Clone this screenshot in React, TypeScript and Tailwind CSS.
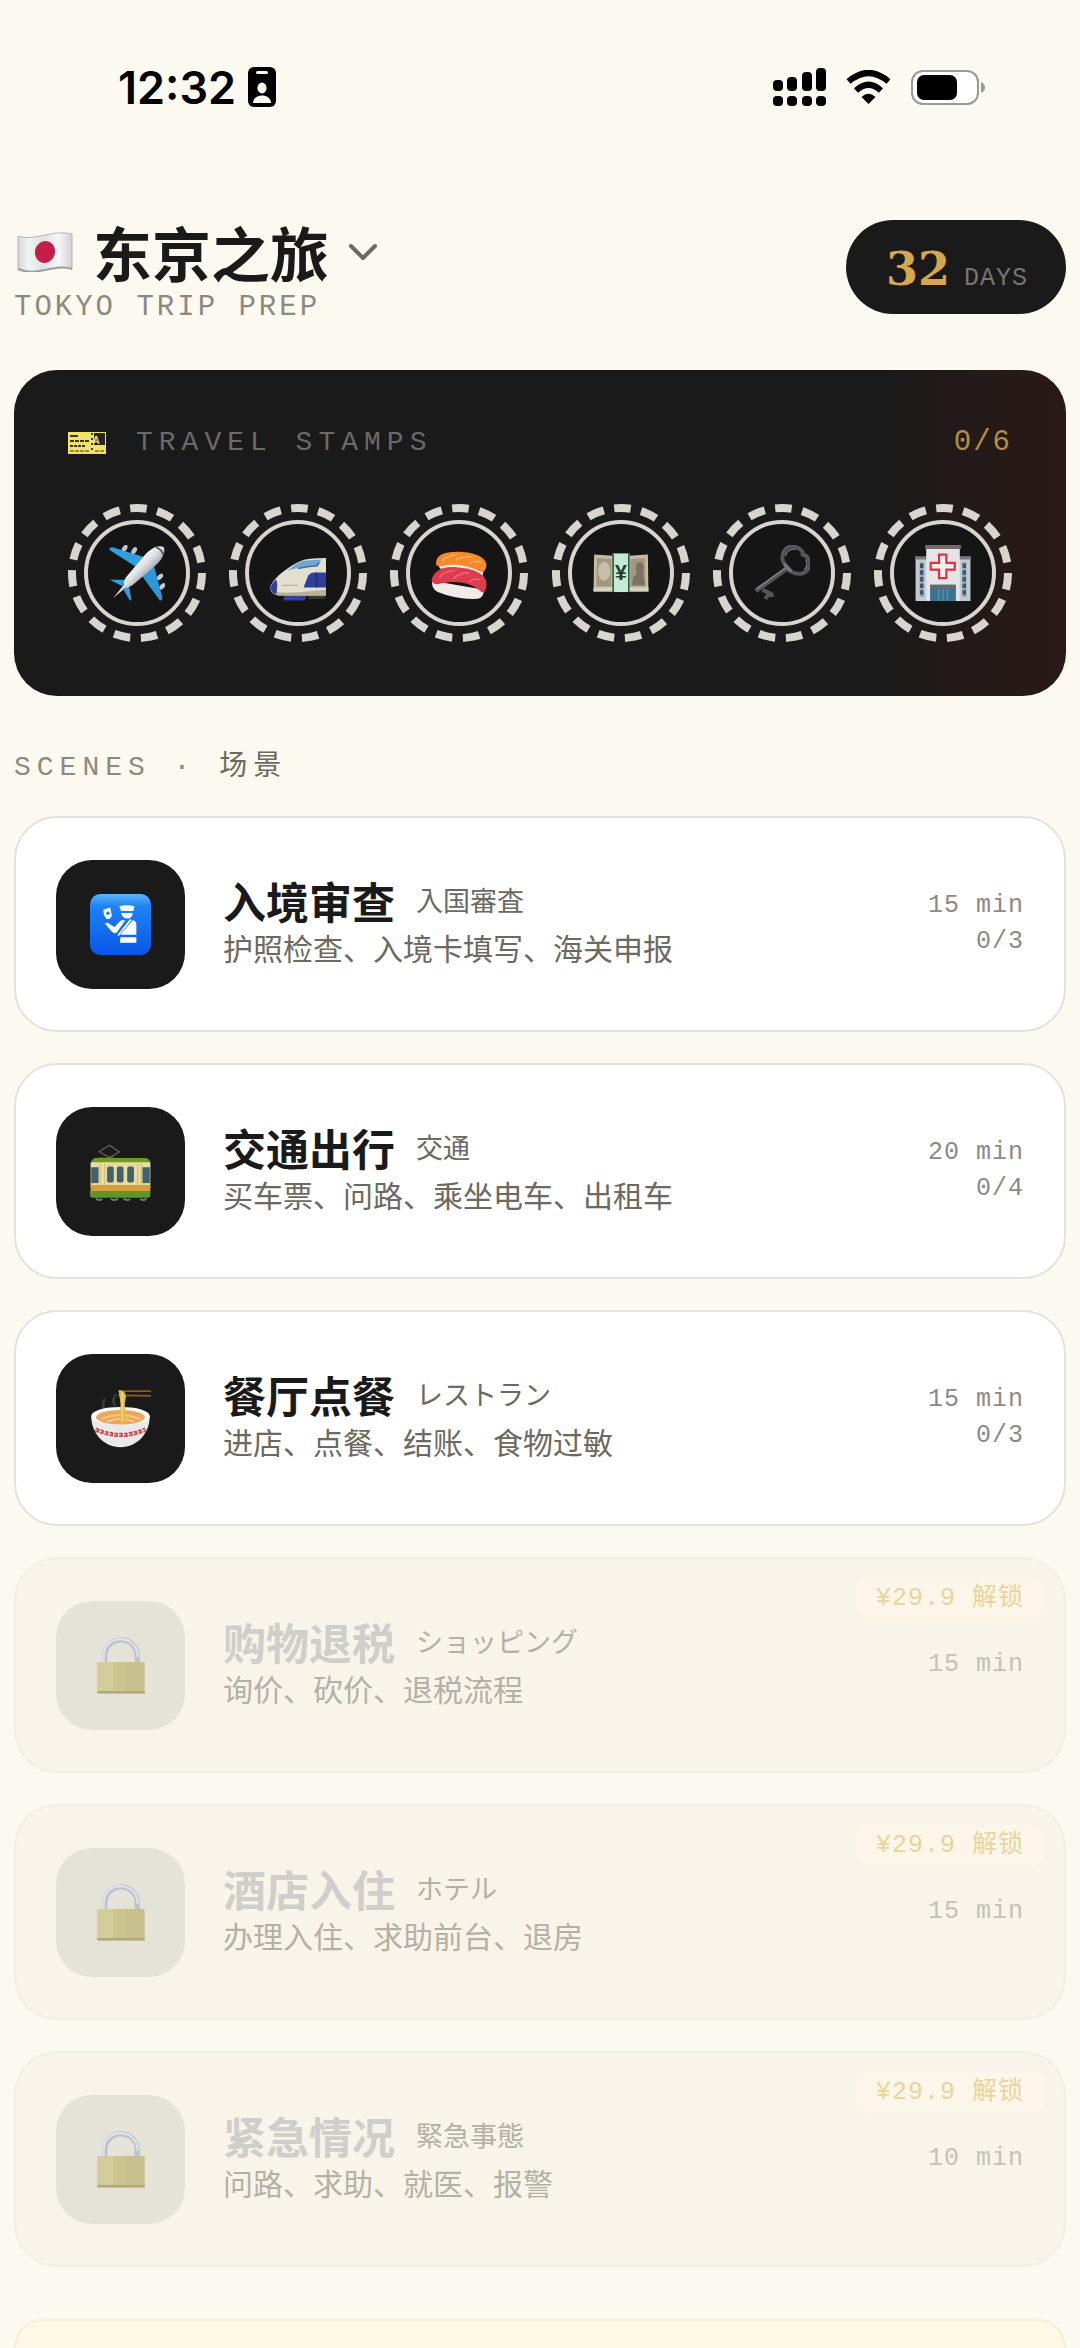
import React from "react";
import { ChevronDown } from "lucide-react";

const mono = "font-['Liberation_Mono','Noto_Sans_CJK_SC',monospace]";

type Scene = {
  title: string;
  local: string;
  description: string;
  minutes: number;
  total: number;
  price?: string;
  icon: React.ReactNode;
};

const Flag = () => (
  <svg viewBox="-3 0 69 40" className="h-10 w-[69px]" aria-hidden="true">
    <defs>
      <linearGradient id="flag" x1="0" x2="1">
        <stop offset="0" stopColor="#d5d7da" />
        <stop offset="0.2" stopColor="#f3f4f5" />
        <stop offset="0.45" stopColor="#dfe1e4" />
        <stop offset="0.75" stopColor="#f6f6f7" />
        <stop offset="1" stopColor="#cfd1d4" />
      </linearGradient>
    </defs>
    <path d="M1 4 C11 7 18 5 28 3 S46 0 55 2 V37 C46 34 37 36 28 38 S10 41 1 37 Z" fill="url(#flag)" stroke="#b3b5b8" strokeWidth="1" />
    <path d="M1 37 C11 41 18 40 28 38 S46 34 55 37" fill="none" stroke="#9c9ea1" strokeWidth="2" />
    <ellipse cx="28" cy="20" rx="10" ry="11" fill="#c41e4b" transform="rotate(14 28 20)" />
  </svg>
);

const Ticket = () => (
  <svg viewBox="0 0 38 22" className="h-[22px] w-[38px]" aria-hidden="true">
    <rect width="38" height="22" fill="#f1e36a" />
    <rect x="26" y="1" width="11" height="12" fill="#26241a" />
    <text x="31" y="12" textAnchor="middle" fontSize="10" fontWeight="700" fontFamily="Liberation Sans" fill="#f1e36a">
      A
    </text>
    <g stroke="#3b361c" strokeWidth="2">
      <path d="M2 4h8" />
      <path d="M2 9h19" strokeDasharray="4 1" />
      <path d="M2 14h15" strokeDasharray="3 1" />
      <path d="M2 19h20M27 19h9" strokeWidth="1" strokeDasharray="4 1" />
      <path d="M24 1v20" strokeDasharray="2 3" />
    </g>
  </svg>
);

const Plane = () => (
  <svg viewBox="0 0 100 100" className="size-14" aria-hidden="true">
    <defs>
      <linearGradient id="body" x1="0.3" y1="0.3" x2="0.6" y2="0.6">
        <stop offset="0" stopColor="#ffffff" />
        <stop offset="0.6" stopColor="#e2e3e6" />
        <stop offset="1" stopColor="#a9acb2" />
      </linearGradient>
    </defs>
    <g fill="#c3c6cb">
      <ellipse cx="28" cy="6" rx="4" ry="7" transform="rotate(35 28 6)" />
      <ellipse cx="45" cy="10" rx="4" ry="7" transform="rotate(35 45 10)" />
      <ellipse cx="91" cy="57" rx="4" ry="7" transform="rotate(45 91 57)" />
      <ellipse cx="95" cy="74" rx="4" ry="7" transform="rotate(45 95 74)" />
    </g>
    <path d="M1 9 Q0 4 6 4 L64 22 L50 40 Z" fill="#2f9fe0" />
    <path d="M80 36 L95 93 Q96 100 91 99 L58 54 Z" fill="#2a97da" />
    <path d="M1 62 L30 62 L24 73 Z M35 69 L40 98 Q38 101 36 97 L26 80 Z" fill="#2f9fe0" />
    <path d="M98 4 C101 12 96 24 86 34 L44 70 Q36 76 30 76 L7 95 L26 72 Q26 64 30 58 L64 18 C76 4 90 -1 98 4Z" fill="url(#body)" />
    <path d="M84 4 Q93 7 97 17" stroke="#4a4e55" strokeWidth="3" fill="none" />
  </svg>
);

const Bullet = () => (
  <svg viewBox="0 0 100 100" className="size-14" aria-hidden="true">
    <path d="M26 88 H66 L62 99 H24 Z" fill="#34419c" />
    <path d="M66 88 H98 V96 H70 Z" fill="#3b3a33" />
    <path d="M0 76 C4 62 28 40 56 28 Q66 23 100 23 V90 H18 C6 90 0 84 0 76Z" fill="#e4e0cf" />
    <path d="M3 82 C20 88 60 84 100 80 V90 H18 Q8 90 3 82Z" fill="#b7b293" />
    <path d="M0 76 Q3 68 11 61 Q15 72 11 88 Q1 86 0 76Z" fill="#34419c" />
    <path d="M31 46 Q48 31 60 28 L92 26 L84 37 Q50 39 31 46Z" fill="#6fa7d4" />
    <path d="M50 42 Q66 38 84 37 L88 31" stroke="#3c6ea3" strokeWidth="3" fill="none" />
    <path d="M68 55 Q72 49 80 49 H100 V76 H60 Z" fill="#2f3f9c" />
    <path d="M83 49 V76" stroke="#1f2a70" strokeWidth="2" />
    <path d="M22 72 H50" stroke="#c9a98d" strokeWidth="2" />
  </svg>
);

const Sushi = () => (
  <svg viewBox="0 0 100 100" className="size-14" aria-hidden="true">
    <path d="M12 32 Q50 28 94 44 L92 56 Q50 52 16 42Z" fill="#efe9e2" />
    <path d="M9 34 C8 18 24 12 46 12 C74 12 96 20 99 34 C99 46 94 50 86 47 C66 36 42 32 18 38 Q10 39 9 34Z" fill="#f58a2c" />
    <path d="M20 28 Q32 18 46 17 M44 27 Q60 19 74 21 M68 33 Q80 27 90 31" stroke="#ffa95c" strokeWidth="3" fill="none" />
    <path d="M2 64 Q0 78 12 84 Q46 98 84 96 Q94 94 95 80Z" fill="#f1ece6" />
    <path d="M1 62 C6 44 24 37 48 40 C78 42 98 52 99 68 C99 82 95 87 90 84 C78 70 48 62 22 68 Q2 74 1 62Z" fill="#dc3c4e" />
    <path d="M14 58 Q26 46 42 46 M40 60 Q54 48 68 50 M68 66 Q78 58 88 62" stroke="#e96874" strokeWidth="3" fill="none" />
  </svg>
);

const Yen = () => (
  <svg viewBox="0 0 100 100" className="size-14" aria-hidden="true">
    <path d="M2 17 L36 19 V83 H1 Z M64 19 L98 17 L99 83 H64Z" fill="#c6bca6" />
    <path d="M7 23 L33 25 V74 H6 Z M67 25 L93 23 L94 74 H67Z" fill="#a2977f" />
    <path d="M1 76h98v7H1z" fill="#d7d1c2" />
    <ellipse cx="20" cy="47" rx="11" ry="17" fill="#c9bfa8" />
    <path d="M70 72 Q70 56 78 52 Q72 32 84 30 Q94 34 89 52 L93 72Z" fill="#7c7162" />
    <path d="M35 15h30v69H35z" fill="#c4ead1" />
    <path d="M36 15v69M64 15v69" stroke="#2f5f4a" strokeWidth="3" />
    <text x="50" y="62" textAnchor="middle" fontSize="38" fontWeight="700" fontFamily="Liberation Sans" fill="#1f3a2e">
      ¥
    </text>
  </svg>
);

const Key = () => (
  <svg viewBox="0 0 100 100" className="size-14" fill="none" aria-hidden="true">
    <g stroke="#55565a" strokeWidth="7">
      <path d="M58 38 C44 24 52 2 70 3 C82 4 88 12 87 17 C99 20 103 34 96 44 C86 56 68 52 62 42Z" />
      <path d="M62 40 L3 82" strokeWidth="8" />
      <path d="M15 80 L28 86 L20 96 M24 88 L35 90" />
    </g>
    <path d="M57 40 L5 78" stroke="#919297" strokeWidth="2" />
    <path d="M54 34 L66 48" stroke="#77787c" strokeWidth="6" />
    <path d="M56 20 Q60 5 74 8 M92 26 Q98 36 90 44" stroke="#838489" strokeWidth="2" />
  </svg>
);

const Hospital = () => (
  <svg viewBox="0 0 100 100" className="size-14" aria-hidden="true">
    <path d="M1 22h98v78H1z" fill="#c6cacf" />
    <path d="M0 20h22v6H0zM78 20h22v6H78z" fill="#74787e" />
    <path d="M8 31h8v62H8zM84 31h8v62H84z" fill="#8eabc0" />
    <path d="M12 33v58M88 33v58" stroke="#3e566b" strokeWidth="6" strokeDasharray="8 4" />
    <path d="M20 4h60v96H20z" fill="#e5e5e7" />
    <path d="M18 0h64v7H18z" fill="#74696b" />
    <path d="M43 17h13v15h15v12H56v15H43V44H28V32h15z" fill="#f4f0f0" stroke="#dc3345" strokeWidth="4" />
    <path d="M27 71h46v29H27z" fill="#397491" />
    <path d="M27 71h46v7H27z" fill="#65696e" />
    <path d="M42 79v21M50 79v21M58 79v21" stroke="#5d94ae" strokeWidth="2" />
  </svg>
);

const Passport = () => (
  <svg viewBox="0 0 100 100" className="size-[61px]" aria-hidden="true">
    <defs>
      <linearGradient id="sign" x1="0" y1="0" x2="0" y2="1">
        <stop offset="0" stopColor="#5db5fb" />
        <stop offset="0.2" stopColor="#1e84f2" />
        <stop offset="1" stopColor="#0a55ea" />
      </linearGradient>
    </defs>
    <rect width="100" height="100" rx="17" fill="url(#sign)" />
    <g fill="#fff">
      <path d="M48 20 Q60 17 73 20 L71 28 H51Z" />
      <path d="M51 31 H70 Q70 40 61 40 Q53 40 51 31Z" />
      <path d="M22 26 L33 22 L36 36 L32 41 L27 41 Q22 36 22 26Z" />
      <path d="M24 48 L29 47 L40 54 L51 43 H58 L44 63 Q40 66 36 62Z" />
      <path d="M70 43 Q76 44 76 50 V67 H50 Q52 63 57 58Z" />
      <path d="M50 71 H76 V80 H49Z" />
    </g>
    <path d="M67 42 L46 68" stroke="#fff" strokeWidth="3" />
    <path d="M27 29h5v5h-5z" fill="#1e72ee" />
  </svg>
);

const Tram = () => (
  <svg viewBox="0 0 100 100" className="size-[61px]" aria-hidden="true">
    <path d="M14 18 L32 7 L48 18 L32 27 L16 18 M14 28 H40" stroke="#66675f" strokeWidth="2" fill="none" />
    <path d="M2 36 Q3 28 10 28 H90 Q98 28 99 36Z" fill="#6b9a2d" />
    <path d="M1 35h98v41H1z" fill="#e9dc9d" />
    <path d="M1 72h98v10H1z" fill="#d89c3b" />
    <path d="M0 82h99v8Q98 93 94 93H4Q0 93 0 88Z" fill="#5f962a" />
    <g fill="#41616c">
      <rect x="2" y="43" width="12" height="26" />
      <rect x="28" y="42" width="11" height="26" rx="3" />
      <rect x="44" y="42" width="11" height="26" rx="3" />
      <rect x="61" y="42" width="11" height="26" rx="3" />
      <rect x="86" y="43" width="12" height="26" />
    </g>
    <path d="M17 37v36M24 37v36M78 37v36M84 37v36" stroke="#d2c17e" strokeWidth="2" />
    <path d="M10 94 Q14 99 20 95 M34 95 Q42 99 46 94 M55 94 Q60 99 66 95 M82 95 Q90 99 92 94" fill="none" stroke="#77786f" strokeWidth="3" />
  </svg>
);

const Ramen = () => (
  <svg viewBox="0 0 100 100" className="size-[61px]" aria-hidden="true">
    <path d="M46 5 L100 5 M46 12 L100 13" stroke="#8a5a1c" strokeWidth="3" />
    <path d="M24 34 Q18 26 25 18 M42 30 Q34 20 43 10" stroke="#3c3c3c" strokeWidth="4" fill="none" />
    <path d="M2 46 C2 74 22 97 50 97 S98 74 98 46Z" fill="#e9e9ea" />
    <ellipse cx="50" cy="46" rx="48" ry="15" fill="#fafafa" />
    <ellipse cx="50" cy="48" rx="40" ry="12" fill="#eda65c" />
    <path d="M18 51 Q50 38 82 51 M28 55 Q50 46 72 55" stroke="#f8ca8b" strokeWidth="3" fill="none" />
    <path d="M47 4 Q57 2 59 14 L57 26 L58 56 L49 56 L50 26Z" fill="#e3bb4b" />
    <path d="M53 8 V54" stroke="#f6dc85" strokeWidth="2" />
    <path d="M9 68 Q50 86 91 68" stroke="#c9444c" strokeWidth="7" strokeDasharray="6 2" fill="none" />
    <path d="M9 68 Q50 86 91 68" stroke="#eed5d5" strokeWidth="2" strokeDasharray="3 5" fill="none" />
  </svg>
);

const Lock = () => (
  <svg viewBox="0 0 100 100" className="size-[58px]" aria-hidden="true">
    <path d="M22 48 V36 C22 -3 78 -3 78 36 V48" fill="none" stroke="#bcc2cc" strokeWidth="9" />
    <path d="M20 46 V36 C20 -5 78 -5 79 36" fill="none" stroke="#dfe3ea" strokeWidth="4" />
    <rect x="9" y="45" width="82" height="54" rx="2" fill="#d3cc9b" />
    <path d="M37 45h22v51H37z" fill="#ccc590" />
    <path d="M59 45h31v51H59z" fill="#c9c18d" />
    <path d="M9 95h82v4H9z" fill="#b1a87c" />
  </svg>
);

const stamps = [
  { name: "Flight", icon: <Plane /> },
  { name: "Train", icon: <Bullet /> },
  { name: "Food", icon: <Sushi /> },
  { name: "Money", icon: <Yen /> },
  { name: "Hotel", icon: <Key /> },
  { name: "Hospital", icon: <Hospital /> },
];

const scenes: Scene[] = [
  { title: "入境审查", local: "入国審査", description: "护照检查、入境卡填写、海关申报", minutes: 15, total: 3, icon: <Passport /> },
  { title: "交通出行", local: "交通", description: "买车票、问路、乘坐电车、出租车", minutes: 20, total: 4, icon: <Tram /> },
  { title: "餐厅点餐", local: "レストラン", description: "进店、点餐、结账、食物过敏", minutes: 15, total: 3, icon: <Ramen /> },
  { title: "购物退税", local: "ショッピング", description: "询价、砍价、退税流程", minutes: 15, total: 3, price: "¥29.9", icon: <Lock /> },
  { title: "酒店入住", local: "ホテル", description: "办理入住、求助前台、退房", minutes: 15, total: 3, price: "¥29.9", icon: <Lock /> },
  { title: "紧急情况", local: "緊急事態", description: "问路、求助、就医、报警", minutes: 10, total: 3, price: "¥29.9", icon: <Lock /> },
];

const StatusBar = () => (
  <div className="flex items-center justify-between pt-14 pr-[95px] pl-[118px] text-black">
    <div className="flex h-[62px] items-center gap-3">
      <span className="font-['Inter',sans-serif] text-[45px] font-semibold leading-none">12:32</span>
      <svg viewBox="0 0 28 40" className="h-10 w-7" aria-hidden="true">
        <rect width="28" height="40" rx="6" />
        <g fill="#fcf9f0">
          <rect x="8" y="4" width="12" height="3" rx="1.5" />
          <ellipse cx="14" cy="21" rx="4.6" ry="5.4" />
          <path d="M5 36 C5 26 23 26 23 36Z" />
        </g>
      </svg>
    </div>
    <div className="flex items-center gap-5">
      <svg viewBox="0 0 53 38" className="h-[38px] w-[53px]" aria-hidden="true">
        <rect x="0" y="12" width="10" height="11" rx="4" />
        <rect x="14" y="9" width="10" height="14" rx="4" />
        <rect x="29" y="4" width="10" height="19" rx="4" />
        <rect x="43" y="0" width="10" height="23" rx="4" />
        <rect x="0" y="28" width="10" height="10" rx="4" />
        <rect x="14" y="28" width="10" height="10" rx="4" />
        <rect x="29" y="28" width="10" height="10" rx="4" />
        <rect x="43" y="28" width="10" height="10" rx="4" />
      </svg>
      <svg viewBox="0 0 45 34" className="h-[34px] w-[45px]" aria-hidden="true">
        <path d="M2.5 11.5 Q22.5 -5.5 42.5 11.5" fill="none" stroke="#000" strokeWidth="6.2" />
        <path d="M10 20.5 Q22.5 9 35 20.5" fill="none" stroke="#000" strokeWidth="6" />
        <path d="M15.5 27 Q22.5 20.5 29.5 27 L22.5 34Z" />
      </svg>
      <svg viewBox="0 0 74 35" className="h-[35px] w-[74px]" aria-hidden="true">
        <rect x="1" y="1" width="66" height="33" rx="11" fill="#fff" stroke="#9b9a94" strokeWidth="2" />
        <rect x="6" y="5" width="40" height="25" rx="7" />
        <path d="M70 12 Q74 14 74 17.500 T70 23Z" fill="#9b9a94" />
      </svg>
    </div>
  </div>
);

const Stamp = ({ name, icon }: { name: string; icon: React.ReactNode }) => (
  <li className="grid size-[138px] place-items-center" title={name}>
    <svg viewBox="0 0 138 138" className="col-start-1 row-start-1 size-full" fill="none" aria-hidden="true">
      <circle cx="69" cy="69" r="65" stroke="#d8d5ce" strokeWidth="8" pathLength="150" strokeDasharray="6.1 3.9" transform="rotate(-96 69 69)" />
      <circle cx="69" cy="69" r="51" fill="#151515" stroke="#d8d5ce" strokeWidth="4" />
    </svg>
    <span className="col-start-1 row-start-1">{icon}</span>
  </li>
);

const SceneCard = ({ scene }: { scene: Scene }) => {
  const locked = Boolean(scene.price);

  return (
    <button
      type="button"
      className={`relative flex h-[216px] w-full items-center gap-[38px] rounded-[43px] border-2 px-10 text-left ${
        locked ? "border-[#f1eee4] bg-[#f8f4e9]" : "border-[#e4e2da] bg-white"
      }`}
    >
      <span
        className={`grid size-[129px] shrink-0 place-items-center rounded-[36px] ${
          locked ? "bg-[#e5e3d7]" : "bg-[#1a1a1a]"
        }`}
      >
        {scene.icon}
      </span>
      <span className="flex flex-1 flex-col pb-2">
        <span className="flex items-center gap-[21px]">
          <span className={`text-[43px] leading-[54px] font-bold ${locked ? "text-[#cfcecb]" : "text-[#1a1a1a]"}`}>
            {scene.title}
          </span>
          <span
            lang="ja"
            className={`font-['Noto_Sans_CJK_JP',sans-serif] text-[27px] leading-10 ${
              locked ? "text-[#b3b0a6]" : "text-[#6b6960]"
            }`}
          >
            {scene.local}
          </span>
        </span>
        <span className={`text-[30px] leading-10 ${locked ? "text-[#b3b0a6]" : "text-[#6b6960]"}`}>
          {scene.description}
        </span>
      </span>
      <span
        className={`flex flex-col items-end text-[25px] leading-9 tracking-[1px] ${mono} ${
          locked ? "text-[#c3c1b8]" : "text-[#8c8a84]"
        }`}
      >
        <span>{scene.minutes} min</span>
        {!locked && <span>0/{scene.total}</span>}
      </span>
      {locked && (
        <span
          className={`absolute top-5 right-5 rounded-xl bg-[#fbf6e9] px-5 text-[25px] leading-10 tracking-[1px] text-[#ead49c] ${mono}`}
        >
          {scene.price} 解锁
        </span>
      )}
    </button>
  );
};

const App: React.FC = () => {
  return (
    <div className="flex min-h-screen flex-col bg-[#fcf9f0] font-['Noto_Sans_CJK_SC',sans-serif]" lang="zh-CN">
      <StatusBar />

      <header className="flex items-start justify-between px-[14px] pt-[102px]">
        <div>
          <button type="button" className="flex h-16 items-center gap-[10px]">
            <Flag />
            <h1 className="text-[59px] leading-[64px] font-bold text-[#1a1a1a]">东京之旅</h1>
            <ChevronDown className="size-12 text-[#6b6960]" strokeWidth={2} />
          </button>
          <p className={`mt-2 text-[29px] leading-8 tracking-[3px] text-[#8c8a80] ${mono}`}>TOKYO TRIP PREP</p>
        </div>
        <div className="flex h-[94px] items-baseline gap-[14px] rounded-full bg-[#1a1a1a] pr-[38px] pl-10 leading-[98px]">
          <span className="font-['DejaVu_Serif',serif] text-[46px] font-bold text-[#d4a84b]">32</span>
          <span className={`text-[25px] tracking-[1px] text-[#77756f] ${mono}`}>DAYS</span>
        </div>
      </header>

      <main className="flex flex-1 flex-col px-[14px] pt-[46px]">
        <section className="rounded-[43px] bg-linear-to-r from-[#1a1a1a] from-82% to-[#2a1917] px-[54px] pt-[53px] pb-[54px]">
          <div className="flex h-10 items-center justify-between">
            <h2 className={`flex items-center gap-[30px] text-[28px] tracking-[6px] text-[#6b6a68] ${mono}`}>
              <Ticket />
              TRAVEL STAMPS
            </h2>
            <span className={`text-[29px] tracking-[2px] text-[#b2903f] ${mono}`}>0/6</span>
          </div>
          <ul className="mt-[41px] flex justify-between">
            {stamps.map((stamp) => (
              <Stamp key={stamp.name} name={stamp.name} icon={stamp.icon} />
            ))}
          </ul>
        </section>

        <h2 className={`mt-[52px] text-[28px] leading-10 tracking-[6px] text-[#8c8a80] ${mono}`}>
          SCENES · <span className="text-[#6b6960]">场景</span>
        </h2>

        <div className="mt-7 flex flex-col gap-[31px]">
          {scenes.map((scene) => (
            <SceneCard key={scene.title} scene={scene} />
          ))}
        </div>

        <aside className="mt-[52px] min-h-6 flex-1 rounded-t-[43px] border-2 border-b-0 border-[#f7eed8] bg-[#fef8e5]" />
      </main>
    </div>
  );
};

export default App;
